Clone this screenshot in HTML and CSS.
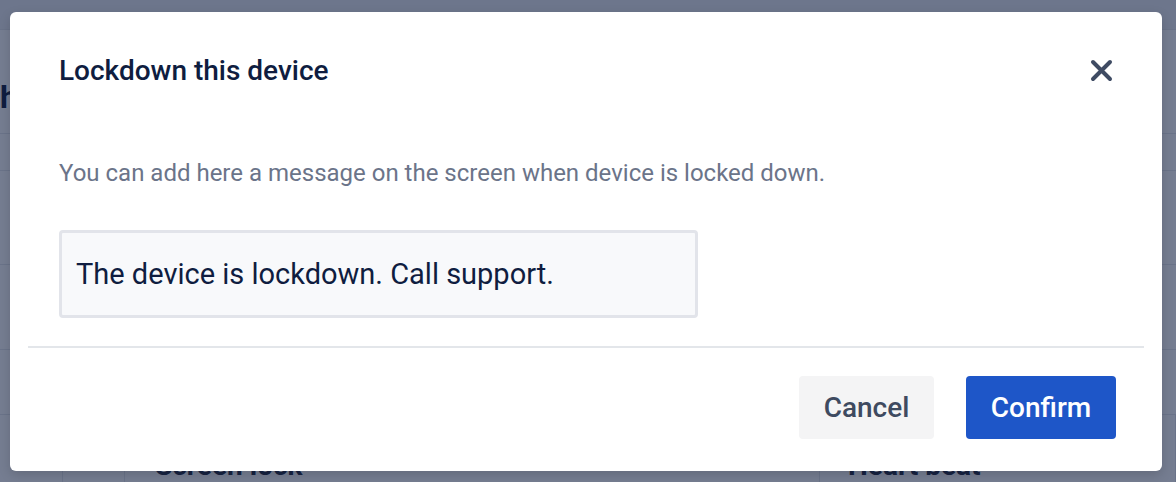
FILE: index.html
```html
<!DOCTYPE html>
<html>
<head>
<meta charset="utf-8">
<link rel="stylesheet" href="styles.css">
</head>
<body>
<div class="page">
  <div class="topbar"></div>
  <div class="heading-row"><span class="heading">h</span></div>
  <div class="row r1"></div>
  <div class="row r2"></div>
  <div class="row r3"></div>
  <div class="row r4"></div>
  <div class="cards">
    <div class="gutter"></div>
    <div class="gutter2"></div>
    <div class="card"><span class="card-title">Screen lock</span></div>
    <div class="card"><span class="card-title">Heart beat</span></div>
  </div>
</div>
<div class="overlay">
  <div class="modal">
    <div class="modal-header">
      <h2 class="modal-title">Lockdown this device</h2>
      <button class="close" aria-label="Close">
        <svg width="23" height="23" viewBox="0 0 23 23"><path d="M3 3 L20 20 M20 3 L3 20" stroke="#3f4b63" stroke-width="4" stroke-linecap="round"/></svg>
      </button>
    </div>
    <div class="modal-body">
      <p class="desc">You can add here a message on the screen when device is locked down.</p>
      <div class="field">The device is lockdown. Call support.</div>
    </div>
    <div class="divider"></div>
    <div class="modal-footer">
      <button class="btn btn-cancel">Cancel</button>
      <button class="btn btn-confirm">Confirm</button>
    </div>
  </div>
</div>
</body>
</html>
```

FILE: styles.css
```css
* { box-sizing: border-box; }
html, body { margin: 0; padding: 0; }
body {
  width: 1176px;
  height: 482px;
  overflow: hidden;
  background: #ffffff;
  font-family: "Roboto", "Liberation Sans", sans-serif;
  position: relative;
}
.page {
  display: flex;
  flex-direction: column;
  height: 482px;
  background: #f7f8fa;
}
.topbar {
  height: 30px;
  background: #eceef2;
  border-bottom: 1px solid #e2e5ea;
}
.heading-row {
  height: 105px;
  display: flex;
  align-items: flex-end;
  padding-bottom: 20px;
  border-bottom: 1px solid #e6e8ec;
  background: #ffffff;
}
.heading {
  font-size: 32px;
  line-height: 32px;
  font-weight: 700;
  color: #0f1d40;
  margin-left: 0;
}
.row { border-bottom: 1px solid #e6e8ec; background: #ffffff; }
.r1 { height: 37px; }
.r2 { height: 95px; }
.r3 { height: 85px; }
.r4 { height: 66px; }
.cards {
  flex: 1;
  display: grid;
  grid-template-columns: 63px 62px 695px 1fr;
  background: #ffffff;
}
.gutter { border-right: 1px solid #e6e8ec; }
.gutter2 { border-right: 1px solid #e6e8ec; }
.card {
  border-right: 1px solid #e6e8ec;
  padding: 34px 0 0 30px;
}
.card + .card { padding-left: 28px; }
.card-title {
  font-size: 28px;
  font-weight: 700;
  color: #1f2a44;
}

.overlay {
  position: absolute;
  inset: 0;
  background: rgba(15, 29, 64, 0.575);
}
.modal {
  position: absolute;
  left: 10px;
  top: 12px;
  width: 1152px;
  height: 459px;
  background: #ffffff;
  border-radius: 6px;
  padding: 0 18px;
  box-shadow: 0 4px 12px rgba(0, 0, 0, 0.15);
  display: flex;
  flex-direction: column;
}
.modal-header {
  display: flex;
  align-items: center;
  justify-content: space-between;
  height: 36px;
  margin-top: 40px;
  padding: 0 31px;
}
.modal-title {
  margin: 0;
  font-size: 28px;
  font-weight: 500;
  color: #0f1d40;
}
.close {
  border: 0;
  background: none;
  padding: 0;
  width: 23px;
  height: 23px;
  display: flex;
}
.modal-body {
  padding: 0 31px;
}
.desc {
  margin: 70px 0 0 0;
  line-height: 30px;
  font-size: 24px;
  color: #6b7489;
}
.field {
  margin-top: 42px;
  width: 639px;
  height: 88px;
  border: 3px solid #e2e4ea;
  border-radius: 4px;
  background: #f8f9fb;
  display: flex;
  align-items: center;
  padding-left: 14px;
  font-size: 29px;
  color: #0f1d40;
}
.divider {
  margin-top: 28px;
  height: 2px;
  background: #e3e6ea;
}
.modal-footer {
  display: flex;
  justify-content: flex-end;
  gap: 32px;
  padding: 28px 28px 0 0;
}
.btn {
  height: 63px;
  border: 0;
  border-radius: 4px;
  font-family: "Roboto", "Liberation Sans", sans-serif;
  font-size: 28px;
  font-weight: 500;
}
.btn-cancel {
  width: 135px;
  background: #f4f4f5;
  color: #3e4a60;
}
.btn-confirm {
  width: 150px;
  background: #1e56c8;
  color: #ffffff;
}
```
